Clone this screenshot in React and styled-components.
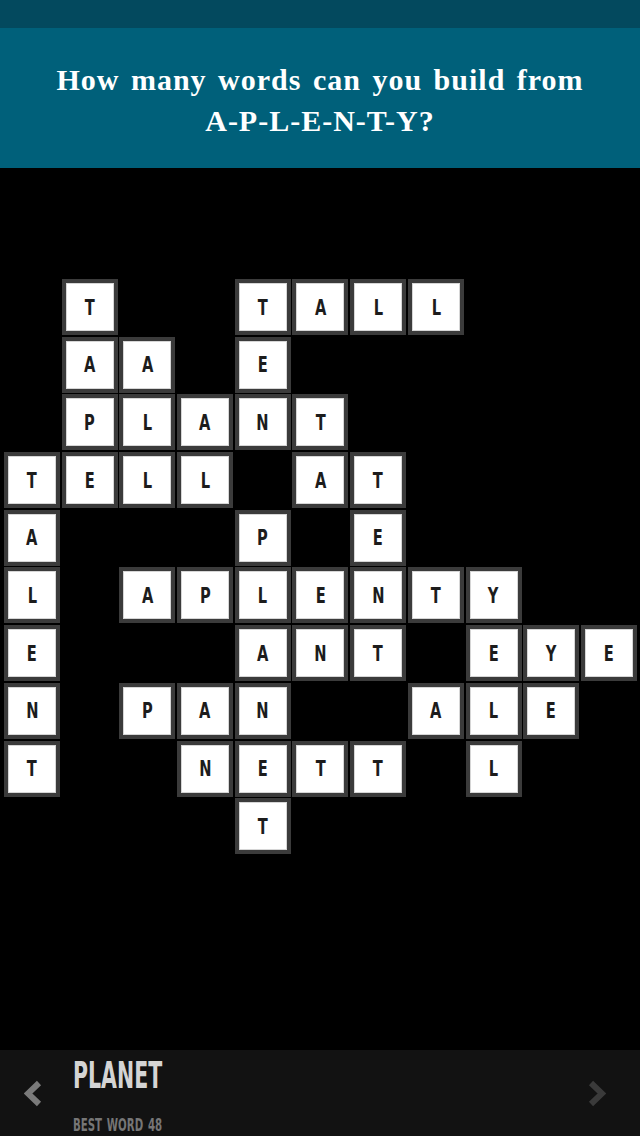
import React from "react";
import styled, { createGlobalStyle } from "styled-components";

const GlobalStyle = createGlobalStyle`
  html, body { margin: 0; padding: 0; background: #000; }
  * { box-sizing: border-box; }
`;

const Screen = styled.div`
  width: 640px;
  height: 1136px;
  display: flex;
  flex-direction: column;
  background: #000;
  overflow: hidden;
`;

const StatusBar = styled.div`
  height: 28px;
  background: #03495e;
  flex: none;
`;

const Header = styled.header`
  height: 140px;
  flex: none;
  background: #00607a;
  display: flex;
  align-items: center;
  justify-content: center;
  text-align: center;
`;

const Question = styled.h1`
  margin: 0;
  color: #fff;
  font-family: "Liberation Serif", "DejaVu Serif", serif;
  font-weight: bold;
  font-size: 30px;
  line-height: 41px;
  letter-spacing: 1px;
  word-spacing: 3px;
  padding-top: 4px;
`;

const Board = styled.main`
  flex: 1;
  padding: 111px 0 0 4px;
`;

const Grid = styled.div`
  display: grid;
  grid-template-columns: repeat(11, 56px);
  grid-template-rows: repeat(10, 56px);
  gap: 1.7px;
`;

const Tile = styled.div`
  grid-column: ${(p) => p.$col + 1};
  grid-row: ${(p) => p.$row + 1};
  width: 56px;
  height: 56px;
  background: #fff;
  border: 4px solid #3b3b3b;
  box-shadow: inset 0 0 0 1px #d6d6d6;
  display: flex;
  align-items: center;
  justify-content: center;
`;

const Letter = styled.span`
  display: inline-block;
  font-family: "DejaVu Sans Condensed", "DejaVu Sans", sans-serif;
  font-weight: bold;
  font-size: 22px;
  line-height: 1;
  color: #1c1c1c;
  transform: scaleX(0.74);
  margin-top: 1px;
`;

const Footer = styled.footer`
  height: 86px;
  flex: none;
  background: #121212;
  display: grid;
  grid-template-columns: 73px 1fr 52px;
  align-items: center;
`;

const NavButton = styled.div`
  display: flex;
  justify-content: flex-start;
  padding-left: ${(p) => (p.$side === "left" ? "24px" : "0")};
  color: ${(p) => (p.$dim ? "#3a3a3a" : "#7a7a7a")};
`;

const Info = styled.div`
  display: flex;
  flex-direction: column;
  align-self: stretch;
`;

const Title = styled.div`
  font-family: "DejaVu Sans Condensed", "DejaVu Sans", sans-serif;
  font-weight: bold;
  font-size: 38px;
  line-height: 1;
  color: #d4d4d4;
  transform: scaleX(0.6);
  transform-origin: left center;
  margin-top: 6px;
  white-space: nowrap;
`;

const SubTitle = styled.div`
  margin-top: auto;
  margin-bottom: 2px;
  font-family: "DejaVu Sans Condensed", "DejaVu Sans", sans-serif;
  font-weight: bold;
  font-size: 18px;
  line-height: 1;
  color: #767676;
  transform: scaleX(0.63);
  transform-origin: left center;
  white-space: nowrap;
  word-spacing: 2px;
`;

const Chevron = ({ dir }) => (
  <svg width="18" height="27" viewBox="0 0 18 27" fill="none">
    <polyline
      points={dir === "left" ? "15,3 4,13.5 15,24" : "3,3 14,13.5 3,24"}
      stroke="currentColor"
      strokeWidth="6"
      strokeLinejoin="miter"
    />
  </svg>
);

const rows = [
  [[1, "T"], [4, "T"], [5, "A"], [6, "L"], [7, "L"]],
  [[1, "A"], [2, "A"], [4, "E"]],
  [[1, "P"], [2, "L"], [3, "A"], [4, "N"], [5, "T"]],
  [[0, "T"], [1, "E"], [2, "L"], [3, "L"], [5, "A"], [6, "T"]],
  [[0, "A"], [4, "P"], [6, "E"]],
  [[0, "L"], [2, "A"], [3, "P"], [4, "L"], [5, "E"], [6, "N"], [7, "T"], [8, "Y"]],
  [[0, "E"], [4, "A"], [5, "N"], [6, "T"], [8, "E"], [9, "Y"], [10, "E"]],
  [[0, "N"], [2, "P"], [3, "A"], [4, "N"], [7, "A"], [8, "L"], [9, "E"]],
  [[0, "T"], [3, "N"], [4, "E"], [5, "T"], [6, "T"], [8, "L"]],
  [[4, "T"]],
];

export default function App() {
  return (
    <>
      <GlobalStyle />
      <Screen>
        <StatusBar />
        <Header>
          <Question>
            How many words can you build from
            <br />
            A-P-L-E-N-T-Y?
          </Question>
        </Header>
        <Board>
          <Grid>
            {rows.map((cells, r) =>
              cells.map(([c, ch]) => (
                <Tile key={`${r}-${c}`} $row={r} $col={c}>
                  <Letter>{ch}</Letter>
                </Tile>
              ))
            )}
          </Grid>
        </Board>
        <Footer>
          <NavButton $side="left">
            <Chevron dir="left" />
          </NavButton>
          <Info>
            <Title>PLANET</Title>
            <SubTitle>BEST WORD 48</SubTitle>
          </Info>
          <NavButton $side="right" $dim>
            <Chevron dir="right" />
          </NavButton>
        </Footer>
      </Screen>
    </>
  );
}
